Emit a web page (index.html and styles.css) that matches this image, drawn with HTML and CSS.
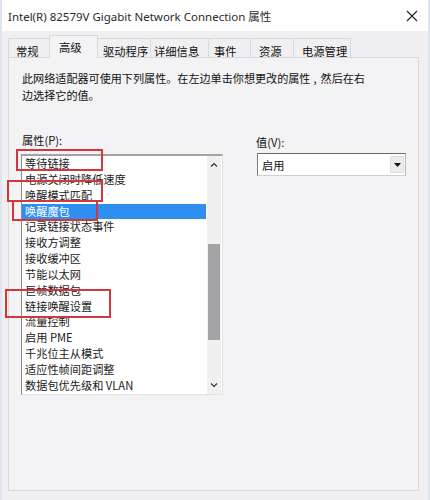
FILE: index.html
```html
<!DOCTYPE html>
<html>
<head>
  <title>Intel(R) 82579V Gigabit Network Connection 属性</title>
  <link rel="stylesheet" href="styles.css">
</head>
<body>
  <div class="window">
    <div class="titlebar">
      <span class="title">Intel(R) 82579V Gigabit Network Connection 属性</span>
      <svg class="close" width="12" height="12" viewBox="0 0 12 12">
        <path d="M1 1 L11 11 M11 1 L1 11" stroke="#222" stroke-width="1.1" fill="none"/>
      </svg>
    </div>

    <div class="tabs">
      <div class="tab t1">常规</div>
      <div class="tab t2 active">高级</div>
      <div class="tab t3">驱动程序</div>
      <div class="tab t4">详细信息</div>
      <div class="tab t5">事件</div>
      <div class="tab t6">资源</div>
      <div class="tab t7">电源管理</div>
    </div>

    <div class="panel">
      <p class="desc">此网络适配器可使用下列属性。在左边单击你想更改的属性<span class="comma">,</span>然后在右<br>边选择它的值。</p>

      <div class="columns">
        <div class="col-left">
          <div class="label">属性(P):</div>
          <div class="listbox">
            <ul class="items">
              <li>等待链接</li>
              <li>电源关闭时降低速度</li>
              <li>唤醒模式匹配</li>
              <li class="selected">唤醒魔包</li>
              <li>记录链接状态事件</li>
              <li>接收方调整</li>
              <li>接收缓冲区</li>
              <li>节能以太网</li>
              <li>巨帧数据包</li>
              <li>链接唤醒设置</li>
              <li>流量控制</li>
              <li>启用 PME</li>
              <li>千兆位主从模式</li>
              <li>适应性帧间距调整</li>
              <li>数据包优先级和 VLAN</li>
            </ul>
            <div class="scrollbar">
              <div class="arrow">
                <svg width="8" height="5" viewBox="0 0 8 5"><path d="M1 4.5 L4 1.5 L7 4.5" stroke="#333" stroke-width="1.2" fill="none"/></svg>
              </div>
              <div class="track">
                <div class="thumb"></div>
              </div>
              <div class="arrow">
                <svg width="8" height="5" viewBox="0 0 8 5"><path d="M1 0.5 L4 3.5 L7 0.5" stroke="#333" stroke-width="1.2" fill="none"/></svg>
              </div>
            </div>
          </div>
        </div>

        <div class="col-right">
          <div class="label">值(V):</div>
          <div class="select">
            <span class="value">启用</span>
            <span class="drop">
              <svg width="7" height="4" viewBox="0 0 7 4"><path d="M0 0 L7 0 L3.5 4 Z" fill="#111"/></svg>
            </span>
          </div>
        </div>
      </div>
    </div>

    <!-- red annotation boxes -->
    <div class="mark m1"></div>
    <div class="mark m2"></div>
    <div class="mark m3"></div>
    <div class="mark m4"></div>
  </div>
</body>
</html>
```

FILE: styles.css
```css
html, body {
  margin: 0;
  padding: 0;
}
body {
  font-family: "Noto Sans", "Noto Sans CJK SC", sans-serif;
  color: #111;
  background: #f0eff2;
}
.window {
  position: relative;
  width: 430px;
  height: 500px;
  box-sizing: border-box;
  background: #f0eff2;
  border-left: 2px solid #dfe4ee;
  border-right: 2px solid #dfe4ee;
  overflow: hidden;
}
.titlebar {
  height: 31px;
  background: #ffffff;
  display: flex;
  align-items: center;
  justify-content: space-between;
  padding: 0 9px 0 6px;
  margin: 0 -2px;
}
.title {
  font-size: 11.5px;
  color: #2a2a2a;
  padding-left: 2px;
}
.close {
  margin-right: 3px;
}

/* tab strip */
.tabs {
  display: flex;
  padding: 4px 0 0 6px;
  height: 22px;
  align-items: flex-end;
  font-family: "Noto Sans CJK SC", sans-serif;
  font-size: 11.3px;
  position: relative;
  z-index: 1;
}
.tab {
  height: 19px;
  box-sizing: border-box;
  padding-top: 4px;
  line-height: 16px;
  border: 1px solid #d9d9d9;
  border-bottom: none;
  margin-left: -1px;
  background: #f0eff2;
  color: #111;
  white-space: nowrap;
}
.tab.active {
  height: 23px;
  padding-top: 3px;
  background: #f3f2f5;
  position: relative;
  top: 1px;
  z-index: 2;
}
.t1 { width: 42px; padding-left: 7px; margin-left: 0; }
.t2 { width: 49px; padding-left: 9px; }
.t3 { width: 54px; padding-left: 5px; }
.t4 { width: 59px; padding-left: 3px; }
.t5 { width: 43px; padding-left: 5px; }
.t6 { width: 44px; padding-left: 8px; }
.t7 { width: 58px; padding-left: 8px; }

.panel {
  margin: 0 9px 0 6px;
  height: 434px;
  border: 1px solid #d9d9d9;
  background: #f3f2f5;
  padding: 12px 0 0 12px;
  box-sizing: border-box;
  font-family: "Noto Sans CJK SC", sans-serif;
  font-size: 11.2px;
}
.desc {
  margin: 0;
  font-size: 11.1px;
  line-height: 17px;
  padding-left: 1px;
  white-space: nowrap;
}
.comma {
  padding: 0 4px 0 3px;
}
.columns {
  display: flex;
  margin-top: 28px;
}
.col-left {
  width: 202px;
}
.col-right {
  margin-left: 32px;
  padding-top: 2px;
}
.label {
  line-height: 16px;
  padding-left: 1px;
}
.listbox {
  margin-top: 6px;
  width: 202px;
  height: 241px;
  box-sizing: border-box;
  display: flex;
  background: #ffffff;
  border-top: 2px solid #a3a3a3;
  border-left: 1px solid #8c8c8c;
  border-right: 1px solid #e2e2e2;
  border-bottom: 1px solid #e2e2e2;
}
.items {
  list-style: none;
  margin: 0;
  padding: 0;
  flex: 1;
}
.items li {
  height: 15.85px;
  line-height: 15.85px;
  padding-left: 3px;
  white-space: nowrap;
  color: #1a1a1a;
}
.items li.selected {
  background: #2f8ff0;
  color: #ffffff;
  margin-right: 1px;
}
.scrollbar {
  width: 14px;
  background: #f0f0f0;
  display: flex;
  flex-direction: column;
  margin-right: 1px;
}
.arrow {
  height: 17px;
  display: flex;
  align-items: center;
  justify-content: center;
}
.track {
  flex: 1;
  padding-top: 71px;
}
.thumb {
  height: 96px;
  background: #a4a3a6;
  margin: 0 1px;
}
.select {
  margin-top: 3px;
  margin-left: 2px;
  width: 149px;
  height: 23px;
  box-sizing: border-box;
  background: #ffffff;
  border: 1px solid #7c7c7c;
  border-top-color: #6a6a6a;
  border-right-color: #b5b5b5;
  border-bottom-color: #cfcfcf;
  display: flex;
  align-items: center;
  justify-content: space-between;
  padding: 0 1px 0 4px;
}
.value {
  line-height: 16px;
}
.drop {
  width: 14px;
  height: 17px;
  background: #ececec;
  border: 1px solid #e0e0e0;
  display: flex;
  align-items: center;
  justify-content: center;
  box-sizing: border-box;
}

.mark {
  position: absolute;
  border: 2px solid #d3363d;
  box-sizing: border-box;
}
.m1 { left: 14px; top: 149px; width: 87px; height: 22px; }
.m2 { left: 5px; top: 180px; width: 96px; height: 22px; }
.m3 { left: 10px; top: 200px; width: 86px; height: 21px; }
.m4 { left: 3px; top: 289px; width: 106px; height: 29px; }
```
